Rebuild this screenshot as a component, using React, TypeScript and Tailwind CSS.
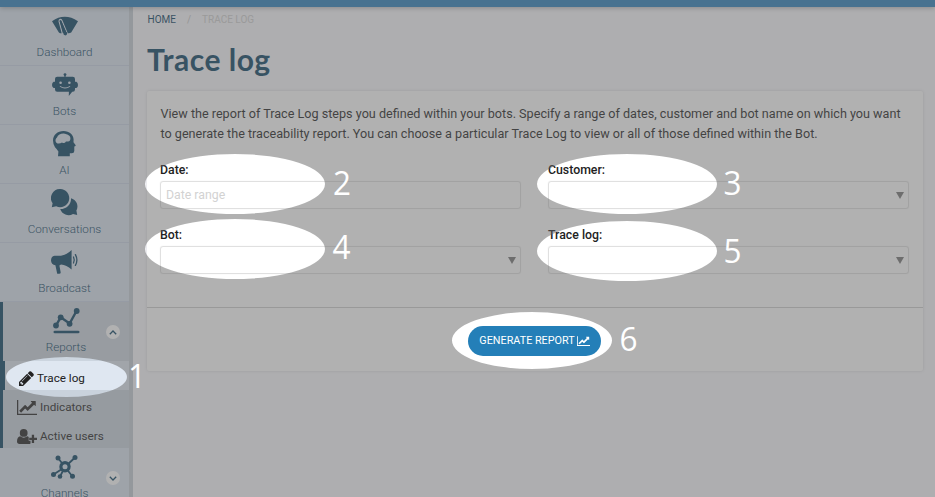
import React from "react";

const ROBOTO = "font-['Roboto','Liberation_Sans',sans-serif]";

function DashboardIcon() {
  return (
    <svg className="w-[26px] h-[20px]" viewBox="0 0 26 20" fill="currentColor">
      <path d="M0 5.200Q12.600-3.600 26 5.200L19.200 16.400Q17.400 17.600 15.200 17H10.600Q8.600 17.800 6.900 16.400Z" />
      <path
        d="M10.600 18.500 7 5.200Q7 3.500 8.300 3.400 9.400 3.400 9.900 4.500L15.300 17.500"
        fill="none"
        className="stroke-[#d9e3ef]"
        strokeWidth="1.100"
      />
      <path d="M7.700 5Q8.300 3.900 9.100 4.800L14.200 15.800A1.900 1.900 0 1 1 11.400 17.500Z" />
    </svg>
  );
}

function BotIcon() {
  return (
    <svg className="w-[26px] h-[23px]" viewBox="0 0 26 23" fill="currentColor">
      <circle cx="13" cy="1.6" r="1.4" />
      <path d="M12.4 2h1.2v2.4h-1.2z" />
      <path fillRule="evenodd" d="M5.2 3.8h15.6Q23 3.8 23 6v2.8h1.4Q26 9.6 26 12t-1.6 3H23v1.6q0 2.2-2.2 2.2h-.6L16.8 23l.1-4.2H5.2Q3 18.800 3 16.600V15H1.600Q0 14.200 0 12t1.600-3.200H3V6Q3 3.800 5.200 3.800ZM8.600 8.400a1.300 1.300 0 1 0 0 2.600 1.300 1.300 0 0 0 0-2.600ZM17.400 8.400a1.300 1.300 0 1 0 0 2.600 1.300 1.300 0 0 0 0-2.600ZM7.600 13.600Q13 17.400 18.400 13.600L17.800 13Q13 16 8.200 13Z" />
    </svg>
  );
}

function HeadIcon() {
  return (
    <svg className="w-[23px] h-[26px]" viewBox="0 0 23 26" fill="currentColor">
      <path fillRule="evenodd" d="M10.500 0C16.500 0 20.500 3.800 20.600 8.500L20.500 11.200 22.700 14.300Q23 15 21.300 15.400V20Q21.200 22.200 18.800 22.200H16.800V25.200H5L5.400 20.400Q4 18.200 2 16.200Q0 13 0 9.500C0 4 4.500 0 10.500 0ZM4 6.500C1.500 8.600 2.500 11.500 4.500 12.400Q7 12.800 9 11.600Q11.500 13 13 10.600Q16.800 10.800 17.300 8.400C18 6 16 3.600 13.400 3.200C10.500 1.700 5 2.800 4 6.500Z" />
    </svg>
  );
}

function ConversationsIcon() {
  return (
    <svg className="w-[27px] h-[27px]" viewBox="0 0 27 27" fill="currentColor">
      <path d="M9.300 0a9.100 9.100 0 1 1-4.100 17.300L.8 18.200 1.600 14.300A9.100 9.100 0 0 1 9.300 0Z" />
      <path d="M20 9.200A8.400 8.400 0 0 1 25.400 21.400L26.200 25.900 22 25.100A8.900 8.900 0 0 1 9.200 20.100C15 20.300 20.500 15.500 20 9.200Z" />
    </svg>
  );
}

function MegaphoneIcon() {
  return (
    <svg className="w-[27px] h-[24px]" viewBox="0 0 27 24" fill="currentColor">
      <path d="M3.500 5.700H10Q16 4.600 20.600 0V19.400Q15.500 15.200 10 14.600L8.400 15.600 9.700 22.600Q9.700 23.800 8.200 23.800H6.200L4.400 15.200Q.2 14.500 0 10.500Q0 6.300 3.500 5.700Z" />
      <g fill="none" stroke="currentColor" strokeWidth="1.300" strokeLinecap="round">
        <path d="M22.500 7Q24 10 22.500 13" />
        <path d="M24.400 4.600Q27.400 10 24.400 15.400" />
      </g>
    </svg>
  );
}

function ReportsIcon() {
  return (
    <svg className="w-[27px] h-[26px]" viewBox="0 0 27 26" fill="currentColor" stroke="currentColor">
      <path d="M3 17.500 7.700 9.300 16.600 15.600 23.500 3" fill="none" strokeWidth="2.400" />
      <g stroke="none">
        <circle cx="3" cy="17.500" r="2.900" />
        <circle cx="7.700" cy="9.300" r="2.900" />
        <circle cx="16.600" cy="15.800" r="2.900" />
        <circle cx="23.700" cy="3" r="2.900" />
      </g>
      <path d="M1.800 24H25.200" strokeWidth="2.600" strokeLinecap="round" />
    </svg>
  );
}

function ChannelsIcon() {
  return (
    <svg className="w-[27px] h-[24px]" viewBox="0 0 27 24" fill="currentColor" stroke="currentColor">
      <g strokeWidth="1.800">
        <path d="M14 12 7 3M14 12 24 2.500M14 12 2.500 19.500M14 12 9 21.500M14 12 21.500 21.500" />
      </g>
      <g stroke="none">
        <circle cx="14" cy="11.800" r="5.700" />
        <circle cx="7" cy="3" r="2.500" />
        <circle cx="24" cy="2.500" r="2.500" />
        <circle cx="2.500" cy="19.500" r="2.500" />
        <circle cx="9" cy="21.500" r="2.300" />
        <circle cx="21.500" cy="21.300" r="2.500" />
      </g>
      <circle cx="14" cy="11.800" r="2.500" className="fill-[#d9e3ef]" stroke="none" />
    </svg>
  );
}

function PencilIcon() {
  return (
    <svg className="w-[15px] h-[15px]" viewBox="128 128 1536 1536" fill="currentColor">
      <path d="M491 1536l91-91-235-235-91 91v107h128v128h107zm523-928q0-22-22-22-10 0-17 7l-542 542q-7 7-7 17 0 22 22 22 10 0 17-7l542-542q7-7 7-17zm-54-192l416 416-832 832h-416v-416zm683 96q0 53-37 90l-166 166-416-416 166-165q36-38 90-38 53 0 91 38l235 234q37 39 37 91z" />
    </svg>
  );
}

function LineChartIcon({ className }: { className: string }) {
  return (
    <svg className={className} viewBox="0 0 2048 1536" fill="currentColor">
      <path d="M2048 1408v128h-2048v-1536h128v1408h1920zM1920 144v435q0 21-19.500 29.500t-35.500-7.500l-121-121-633 633q-10 10-23 10t-23-10l-233-233-416 416-192-192 585-585q10-10 23-10t23 10l233 233 464-464-121-121q-16-16-7.500-35.500t29.500-19.500h435q14 0 23 9t9 23z" />
    </svg>
  );
}

function UserPlusIcon() {
  return (
    <svg className="w-[20px] h-[15px]" viewBox="0 0 20 15" fill="currentColor">
      <circle cx="6.700" cy="3.900" r="3.900" />
      <path d="M3.200 7.300Q6.700 10 10.200 7.300Q11 7.300 11.700 8V11.800H13.500V14.500Q13 15 12.200 15H2.500Q0 15 0 12.300Q.2 7.600 3.200 7.300Z" />
      <path d="M14.800 5.800h2.300v3H20v2.300h-2.900v3h-2.300v-3h-2.600V8.800h2.600Z" />
    </svg>
  );
}

function Toggle({ open }: { open?: boolean }) {
  return (
    <span className="absolute right-[9px] top-[23px] flex size-[14px] items-center justify-center rounded-full bg-white">
      <svg className="w-2 h-[5px]" viewBox="0 0 8 5" fill="none" stroke="currentColor" strokeWidth="1.300">
        <path d={open ? "M.8 4.200 4 1l3.200 3.200" : "M.8.8 4 4 7.200.8"} />
      </svg>
    </span>
  );
}

const NAV_LABEL = "text-[11.700px] font-light leading-[16px] text-[#0b4263]";

function NavItem({ label, children }: { label: string; children: React.ReactNode }) {
  return (
    <li className="flex h-[59px] flex-col items-center border-b border-[#c9d2e4]">
      <div className="flex h-[37px] items-center justify-center">{children}</div>
      <span className={NAV_LABEL}>{label}</span>
    </li>
  );
}

function Field({ label, placeholder, select }: { label: string; placeholder?: string; select?: boolean }) {
  return (
    <div className="flex flex-col">
      <label className="text-[12.300px] font-medium leading-[16px] text-[#222]">{label}</label>
      <div className="mt-[3px] flex h-[28px] items-center justify-between rounded-[3px] border border-[#e0e0e0] px-[5px] shadow-[0_0_1px_rgba(0,0,0,0.15)]">
        <span className="pt-px text-[12.300px] text-[#d2d2d2]">{placeholder}</span>
        {select && (
          <span className="mr-[-1px] h-0 w-0 border-x-[4px] border-t-[7px] border-x-transparent border-t-[#777]" />
        )}
      </div>
    </div>
  );
}

const HOLES = [
  { cx: 66.500, cy: 377, rx: 60.500, ry: 20 },
  { cx: 235, cy: 184, rx: 90, ry: 30 },
  { cx: 627, cy: 184, rx: 90, ry: 30 },
  { cx: 235, cy: 249, rx: 90, ry: 30 },
  { cx: 627, cy: 251, rx: 90, ry: 30 },
  { cx: 532, cy: 340.500, rx: 80, ry: 28.500 },
];

const NUMBERS = [
  { n: "1", x: 128, y: 388 },
  { n: "2", x: 333, y: 195 },
  { n: "3", x: 723.500, y: 195 },
  { n: "4", x: 332.500, y: 259 },
  { n: "5", x: 723.500, y: 263 },
  { n: "6", x: 619.500, y: 351 },
];

/* Dimmed layer with an elliptical spotlight for every numbered step. */
function TourOverlay() {
  const cutouts = HOLES.map(
    (h) =>
      `M${h.cx - h.rx} ${h.cy}a${h.rx} ${h.ry} 0 1 0 ${h.rx * 2} 0a${h.rx} ${h.ry} 0 1 0 ${-h.rx * 2} 0Z`
  ).join("");
  return (
    <svg className="pointer-events-none absolute inset-0 z-20 h-[497px] w-[935px]" viewBox="0 0 935 497">
      <path d={`M0 0H935V497H0Z${cutouts}`} fillRule="evenodd" className="fill-[#636363]/50" />
      {NUMBERS.map((m) => (
        <text
          key={m.n}
          x={m.x}
          y={m.y}
          textLength="18"
          lengthAdjust="spacingAndGlyphs"
          className="fill-white font-['Open_Sans','Noto_Sans',sans-serif] text-[33px]"
        >
          {m.n}
        </text>
      ))}
    </svg>
  );
}

export default function App() {
  return (
    <div className={`relative flex h-[497px] w-[935px] flex-col overflow-hidden bg-[#f8f8fc] ${ROBOTO}`}>
      <header className="z-10 h-[7px] shrink-0 bg-[#2c80bd] shadow-[0_1px_5px_rgba(0,0,0,0.3)]" />
      <div className="flex min-h-0 flex-1">
        <aside className="w-[133px] shrink-0 border-r-4 border-[#c4cdd5] bg-[#d9e3ef] text-[#0b4263]">
          <ul>
            <NavItem label="Dashboard"><DashboardIcon /></NavItem>
            <NavItem label="Bots"><BotIcon /></NavItem>
            <NavItem label="AI"><HeadIcon /></NavItem>
            <NavItem label="Conversations"><ConversationsIcon /></NavItem>
            <NavItem label="Broadcast"><MegaphoneIcon /></NavItem>
            <li className="relative flex h-[59px] flex-col items-center border-l-[3px] border-[#0b4263] bg-[#ccd5df]">
              <div className="flex h-[37px] items-center"><ReportsIcon /></div>
              <span className={NAV_LABEL}>Reports</span>
              <Toggle open />
            </li>
            <li className="border-l-[3px] border-[#0b4263] bg-[#c9d2dc] text-[11.700px] text-[#222]">
              <div className="flex h-[29px] items-center gap-[3px] border-l-2 border-[#0b4263] bg-[#dfe7f1] pl-[14px] pt-[5px]">
                <PencilIcon />
                <span className="pt-[2px]">Trace log</span>
              </div>
              <div className="flex h-[29px] items-center gap-[3px] pl-[14px] pt-[5px]">
                <LineChartIcon className="w-[20px] h-[15px]" />
                <span className="pt-[2px]">Indicators</span>
              </div>
              <div className="flex h-[29px] items-center gap-[3px] pl-[14px] pt-[5px]">
                <UserPlusIcon />
                <span className="pt-[2px]">Active users</span>
              </div>
            </li>
            <li className="relative flex h-[59px] flex-col items-center">
              <div className="flex h-[37px] items-center pt-px"><ChannelsIcon /></div>
              <span className={NAV_LABEL}>Channels</span>
              <Toggle />
            </li>
          </ul>
        </aside>
        <main className="flex-1 pl-[14px] pr-[12px]">
          <nav className="flex gap-[11px] pl-[0.500px] pt-[5px] text-[10px] leading-[16px]">
            <span className="text-[#0b4263]">HOME</span>
            <span className="text-[#c8c8c8]">/</span>
            <span className="text-[#d0d0d0]">TRACE LOG</span>
          </nav>
          <h1 className="mt-[13px] font-['Lato',sans-serif] text-[30px] font-bold leading-[36px] tracking-[0.500px] text-[#0b4263]">
            Trace log
          </h1>
          <section className="mt-[14px] h-[280px] rounded-[2px] bg-white shadow-[0_0_3px_rgba(0,0,0,0.15)]">
            <div className="h-[217px] border-b border-[#cfcfcf] pl-[13px] pr-[14px] pt-[13px]">
              <p className="whitespace-nowrap pl-[0.500px] text-[12.620px] leading-[20px] text-[#222]">
                View the report of Trace Log steps you defined within your bots. Specify a range of dates, customer and bot name on which you want
                <br />
                to generate the traceability report. You can choose a particular Trace Log to view or all of those defined within the Bot.
              </p>
              <div className="mt-[18px] grid grid-cols-2 gap-x-[27px] gap-y-[18px]">
                <Field label="Date:" placeholder="Date range" />
                <Field label="Customer:" select />
                <Field label="Bot:" select />
                <Field label="Trace log:" select />
              </div>
            </div>
            <div className="flex justify-center pr-px pt-[18px]">
              <button className="flex h-[30px] w-[133px] items-center justify-center gap-[2px] rounded-full bg-[#247fb8] text-[10.800px] text-white">
                <span>GENERATE REPORT</span>
                <LineChartIcon className="w-[13px] h-[10px]" />
              </button>
            </div>
          </section>
        </main>
      </div>
      <TourOverlay />
    </div>
  );
}
